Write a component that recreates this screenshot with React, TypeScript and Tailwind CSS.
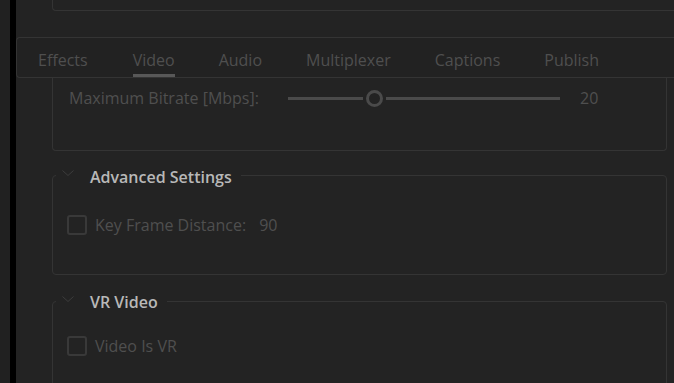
const tabs = ['Effects', 'Video', 'Audio', 'Multiplexer', 'Captions', 'Publish'];

function Chevron() {
  return (
    <svg width="12" height="6" viewBox="0 0 12 6" className="mb-[4px] shrink-0">
      <path d="M0.5 0.5 L6 5.5 L11.5 0.5" fill="none" stroke="#3d3d3d" strokeWidth="1" />
    </svg>
  );
}

function Checkbox() {
  return <div className="h-[20px] w-[20px] shrink-0 rounded-[3px] border-2 border-[#393939]" />;
}

export default function App() {
  return (
    <div className="flex h-[383px] w-[674px] overflow-hidden bg-[#232323] font-['Open_Sans',sans-serif] text-[16px] text-[#4f4f4f]">
      <div className="w-[10px] shrink-0 bg-[#212121]" />
      <div className="w-[6px] shrink-0 bg-black" />

      <div className="flex min-w-0 flex-1 flex-col">
        {/* bottom of the section above */}
        <div className="ml-[36px] h-[11px] shrink-0 rounded-bl-[4px] border-b border-l border-[#343434]" />

        {/* Tab bar */}
        <nav className="mt-[26px] flex h-[41px] shrink-0 gap-[44px] rounded-l-[4px] border-y border-l border-[#343434] bg-[#222222] pl-[21px]">
          {tabs.map((t) => (
            <div
              key={t}
              className={
                'flex items-center border-b-[3px] pt-[7px] leading-none ' +
                (t === 'Video' ? 'ml-[1px] border-[#585858]' : 'border-transparent')
              }
            >
              {t}
            </div>
          ))}
        </nav>

        {/* Bitrate section (scrolled under the tabs) */}
        <div className="ml-[36px] mr-[7px] h-[73px] shrink-0 rounded-b-[4px] border-x border-b border-[#343434]">
          <div className="mt-[8px] flex items-center pl-[16px]">
            <span className="w-[219px] shrink-0">Maximum Bitrate [Mbps]:</span>
            <div className="flex w-[272px] shrink-0 items-center">
              <div className="h-[3px] w-[75px] bg-[#4a4a4a]" />
              <div className="mx-[3px] h-[17px] w-[17px] shrink-0 rounded-full border-[3px] border-[#4a4a4a]" />
              <div className="h-[3px] flex-1 bg-[#4a4a4a]" />
            </div>
            <span className="ml-[20px]">20</span>
          </div>
        </div>

        {/* Advanced Settings */}
        <fieldset className="ml-[36px] mr-[7px] mt-[12px] shrink-0 rounded-[4px] border border-[#343434] pb-[37px]">
          <legend className="ml-[3px] flex h-[24px] items-center pl-[6px] pr-[9px]">
            <Chevron />
            <span className="ml-[16px] mt-[4px] font-semibold text-[#b8b8b8]">Advanced Settings</span>
          </legend>
          <div className="mt-[26px] flex items-center pl-[14px]">
            <Checkbox />
            <span className="ml-[8px]">Key Frame Distance:</span>
            <span className="ml-[13px]">90</span>
          </div>
        </fieldset>

        {/* VR Video */}
        <fieldset className="ml-[36px] mr-[7px] mt-[14px] shrink-0 rounded-[4px] border border-[#343434] pb-[40px]">
          <legend className="ml-[3px] flex h-[24px] items-center pl-[6px] pr-[9px]">
            <Chevron />
            <span className="ml-[16px] mt-[2px] font-semibold text-[#b8b8b8]">VR Video</span>
          </legend>
          <div className="mt-[21px] flex items-center pl-[14px]">
            <Checkbox />
            <span className="ml-[8px]">Video Is VR</span>
          </div>
        </fieldset>
      </div>
    </div>
  );
}
